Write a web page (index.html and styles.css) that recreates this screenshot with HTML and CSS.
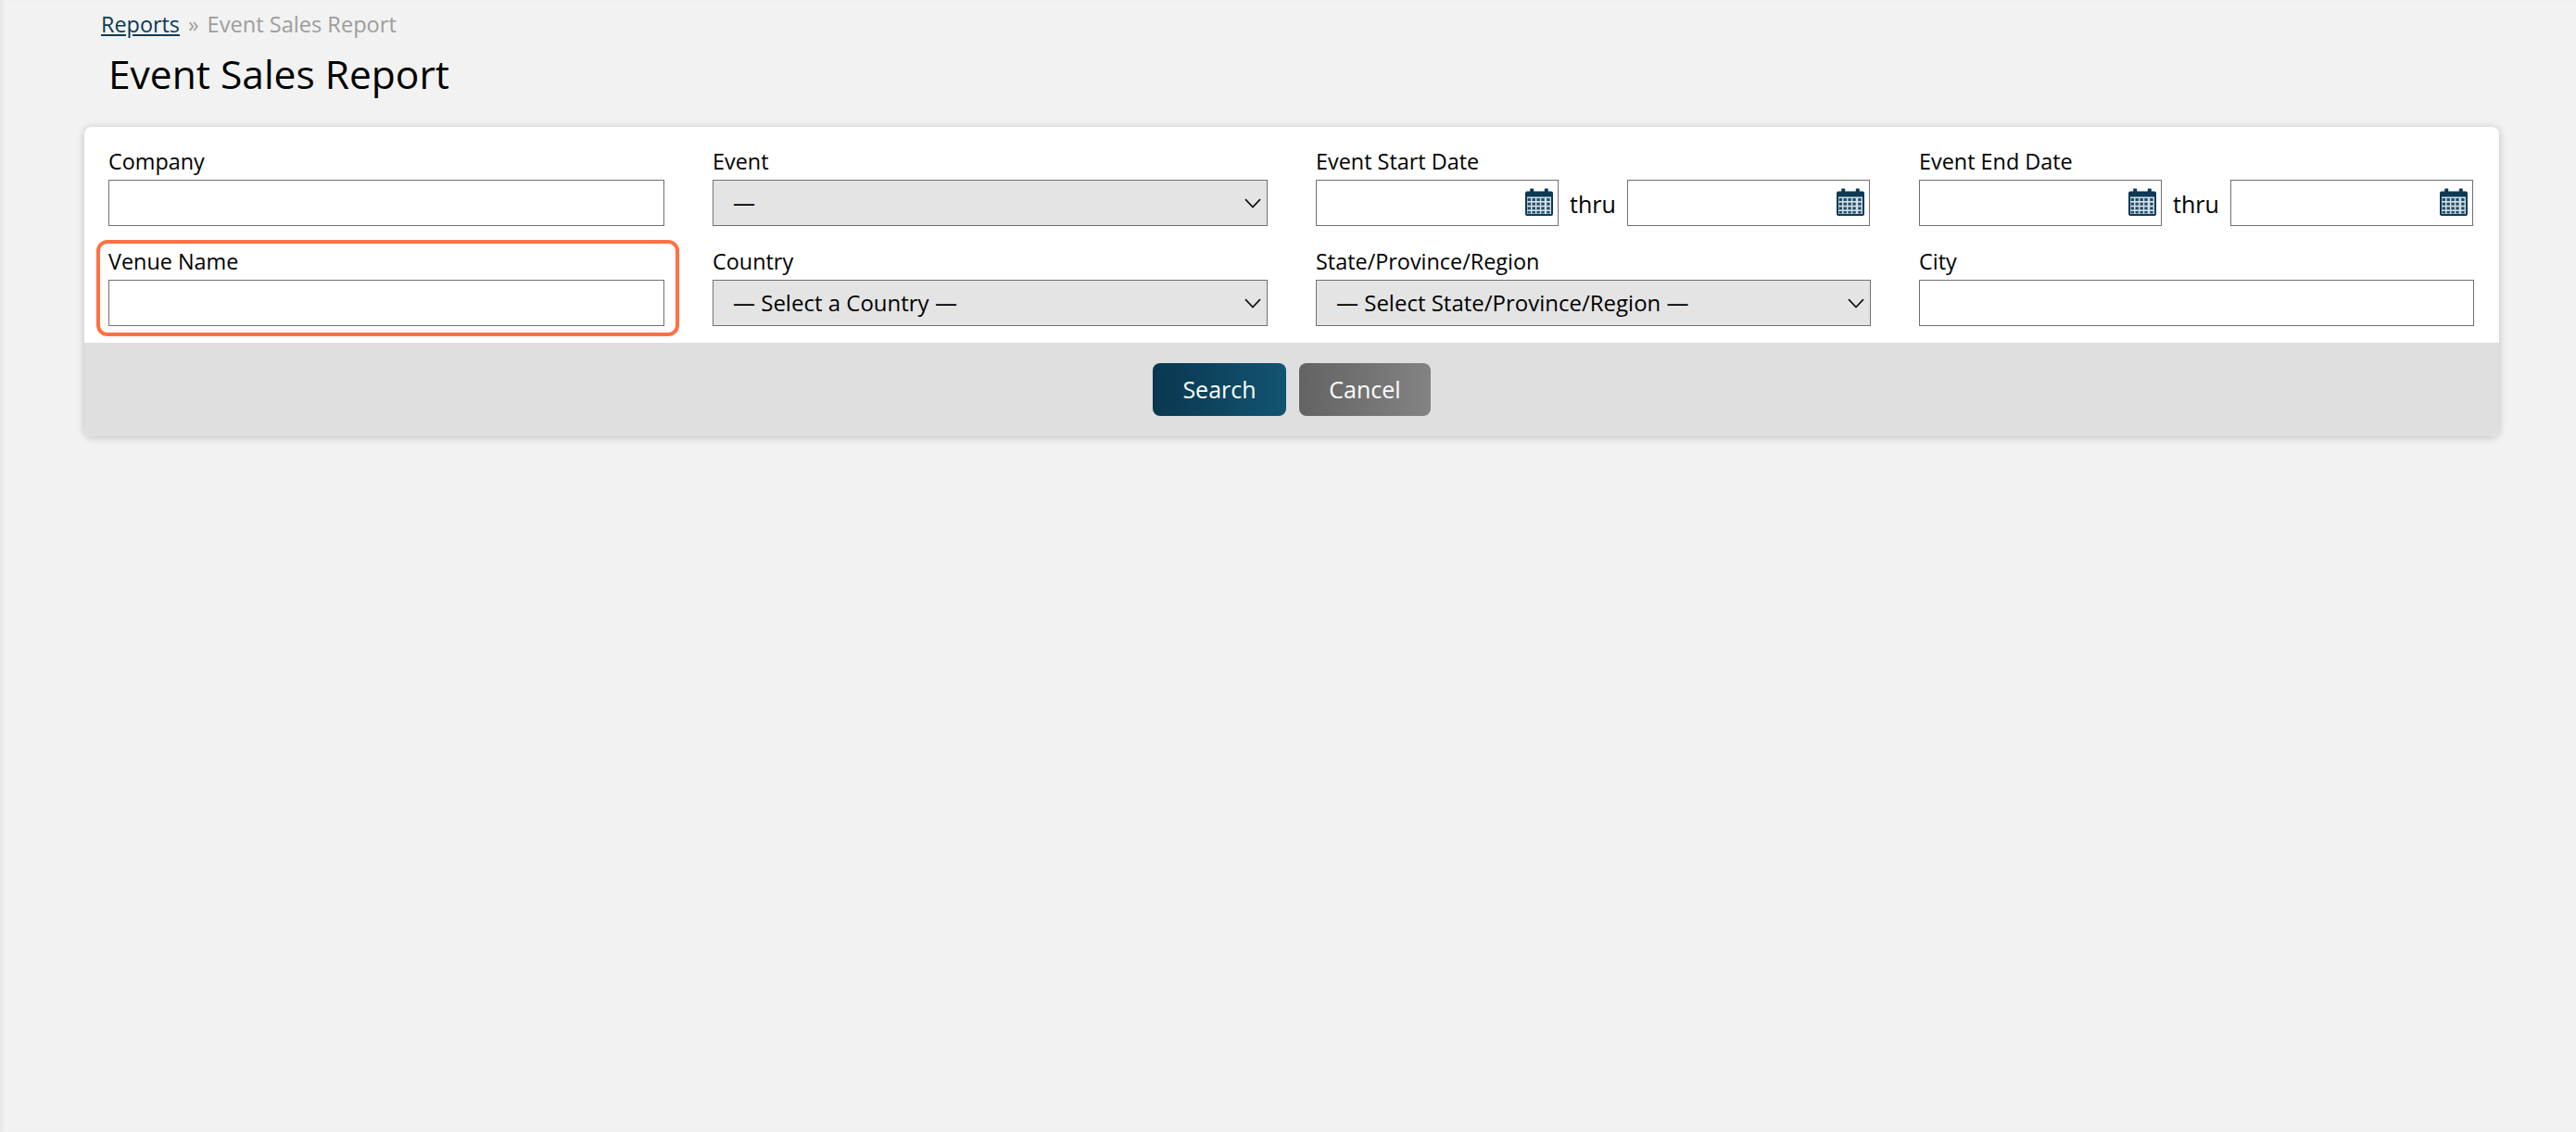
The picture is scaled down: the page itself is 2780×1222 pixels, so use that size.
FILE: index.html
```html
<!DOCTYPE html>
<html lang="en">
<head>
<meta charset="utf-8">
<title>Event Sales Report</title>
<link rel="stylesheet" href="styles.css">
</head>
<body>
<svg class="defs" width="0" height="0" aria-hidden="true">
  <defs>
    <symbol id="cal" viewBox="0 0 30 30">
      <path fill="#0c3a55" d="M6 0.5h2.4a.8.8 0 0 1 .8.8V3.6h11.6V1.3a.8.8 0 0 1 .8-.8H24a.8.8 0 0 1 .8.8V3.6h3.2A2 2 0 0 1 30 5.6v22.4a2 2 0 0 1-2 2H2a2 2 0 0 1-2-2V5.6a2 2 0 0 1 2-2h3.2V1.3a.8.8 0 0 1 .8-.8z"/>
      <rect x="2" y="9.5" width="26" height="18.5" fill="#d3dee6"/>
      <g fill="#1f4d69">
        <rect x="2.6" y="11" width="3.4" height="3"/><rect x="7.5" y="11" width="3.4" height="3"/><rect x="12.4" y="11" width="3.4" height="3"/><rect x="17.3" y="11" width="3.4" height="3"/><rect x="23.2" y="11" width="3.4" height="3"/>
        <rect x="2.6" y="15.7" width="3.4" height="3"/><rect x="7.5" y="15.7" width="3.4" height="3"/><rect x="12.4" y="15.7" width="3.4" height="3"/><rect x="17.3" y="15.7" width="3.4" height="3"/><rect x="23.2" y="15.7" width="3.4" height="3"/>
        <rect x="2.6" y="20.4" width="3.4" height="3"/><rect x="7.5" y="20.4" width="3.4" height="3"/><rect x="12.4" y="20.4" width="3.4" height="3"/><rect x="17.3" y="20.4" width="3.4" height="3"/><rect x="23.2" y="20.4" width="3.4" height="3"/>
        <rect x="2.6" y="25" width="3.4" height="2.4"/><rect x="7.5" y="25" width="3.4" height="2.4"/><rect x="12.4" y="25" width="3.4" height="2.4"/><rect x="17.3" y="25" width="3.4" height="2.4"/><rect x="23.2" y="25" width="3.4" height="2.4"/>
      </g>
    </symbol>
    <symbol id="chev" viewBox="0 0 18 11">
      <path d="M1 1.2L9 9.6l8-8.4" fill="none" stroke="#111" stroke-width="1.7"/>
    </symbol>
  </defs>
</svg>
<main class="page">
  <nav class="crumbs"><a class="crumb-link" href="#">Reports</a><span class="crumb-sep">»</span><span class="crumb-here">Event Sales Report</span></nav>
  <h1 class="title">Event Sales Report</h1>
  <form class="card">
    <div class="fields">
      <div class="field">
        <label class="label">Company</label>
        <input class="input" type="text">
      </div>
      <div class="field">
        <label class="label">Event</label>
        <div class="select-wrap">
          <select class="select"><option>—</option></select>
          <svg class="chev"><use href="#chev"/></svg>
        </div>
      </div>
      <div class="field">
        <label class="label">Event Start Date</label>
        <div class="range">
          <div class="date"><input class="input" type="text"><svg class="cal"><use href="#cal"/></svg></div>
          <span class="thru">thru</span>
          <div class="date"><input class="input" type="text"><svg class="cal"><use href="#cal"/></svg></div>
        </div>
      </div>
      <div class="field">
        <label class="label">Event End Date</label>
        <div class="range">
          <div class="date"><input class="input" type="text"><svg class="cal"><use href="#cal"/></svg></div>
          <span class="thru">thru</span>
          <div class="date"><input class="input" type="text"><svg class="cal"><use href="#cal"/></svg></div>
        </div>
      </div>
      <div class="field field-marked">
        <label class="label">Venue Name</label>
        <input class="input" type="text">
      </div>
      <div class="field">
        <label class="label">Country</label>
        <div class="select-wrap">
          <select class="select"><option>— Select a Country —</option></select>
          <svg class="chev"><use href="#chev"/></svg>
        </div>
      </div>
      <div class="field">
        <label class="label">State/Province/Region</label>
        <div class="select-wrap">
          <select class="select"><option>— Select State/Province/Region —</option></select>
          <svg class="chev"><use href="#chev"/></svg>
        </div>
      </div>
      <div class="field">
        <label class="label">City</label>
        <input class="input" type="text">
      </div>
    </div>
    <div class="actions">
      <button class="btn btn-search" type="button">Search</button>
      <button class="btn btn-cancel" type="button">Cancel</button>
    </div>
  </form>
</main>
</body>
</html>
```
FILE: styles.css
```css
* { box-sizing: border-box; }
html, body { height: 100%; }
body {
  margin: 0;
  background: #f2f2f2;
  font-family: "Open Sans", "Noto Sans", sans-serif;
  color: #000;
  box-shadow: inset 4px 0 4px -2px #e4e4e4;
  overflow: hidden;
}
.defs { position: absolute; }
.page { padding: 11px 83px 0 91px; }
.crumbs {
  padding-left: 18px;
  height: 32px;
  font-size: 23.4px;
  line-height: 30px;
  color: #9d9d9d;
  display: flex;
}
.crumb-link { color: #0c3a55; text-decoration: underline; }
.crumb-sep { margin: 0 9px; }
.crumb-here { font-size: 23.6px; }
.title {
  margin: 0;
  padding-left: 26px;
  height: 94px;
  font-size: 42.5px;
  font-weight: 400;
  line-height: 64px;
  padding-top: 5px;
}
.card {
  background: #fff;
  border-radius: 8px;
  box-shadow: 0 1px 8px rgba(0,0,0,.22);
  overflow: hidden;
}
.fields {
  display: grid;
  grid-template-columns: 600px 599px 599px 599px;
  column-gap: 52px;
  padding: 20px 26px 0;
  height: 233px;
  align-content: start;
}
.field { position: relative; height: 108px; }
.field-marked::after {
  content: "";
  position: absolute;
  left: -13px;
  right: -16px;
  top: -6px;
  bottom: 10px;
  border: 4px solid #ff7043;
  border-radius: 12px;
  pointer-events: none;
}
.label {
  display: block;
  height: 37px;
  font-size: 23.4px;
  line-height: 34px;
}
.input {
  display: block;
  width: 100%;
  height: 50px;
  border: 1px solid #717171;
  outline: 0;
  border-radius: 0;
  background: #fff;
  padding: 0 12px;
  font: inherit;
}
.select-wrap { position: relative; }
.select {
  display: block;
  width: 100%;
  height: 50px;
  border: 1px solid #717171;
  border-radius: 0;
  background: #e4e4e4;
  appearance: none;
  padding: 0 40px 2px 21px;
  font: inherit;
  font-size: 24px;
  color: #000;
}
.chev {
  position: absolute;
  right: 7px;
  top: 20px;
  width: 18px;
  height: 11px;
}
.range { display: flex; width: 598px; }
.date { position: relative; width: 262px; flex: none; }
.cal {
  position: absolute;
  right: 6px;
  top: 9px;
  width: 30px;
  height: 30px;
}
.thru {
  flex: 1;
  text-align: center;
  font-size: 25px;
  line-height: 52px;
}
.actions {
  background: #dfdfdf;
  height: 101px;
  display: flex;
  justify-content: center;
  gap: 14px;
  padding-top: 22px;
}
.btn {
  height: 57px;
  border: 0;
  border-radius: 8px;
  color: #fff;
  font: inherit;
  font-size: 25px;
  padding: 0 0 2px;
}
.btn-search { width: 144px; background: linear-gradient(90deg, #0a374f, #125472); }
.btn-cancel { width: 142px; background: linear-gradient(90deg, #636363, #838383); }
```
